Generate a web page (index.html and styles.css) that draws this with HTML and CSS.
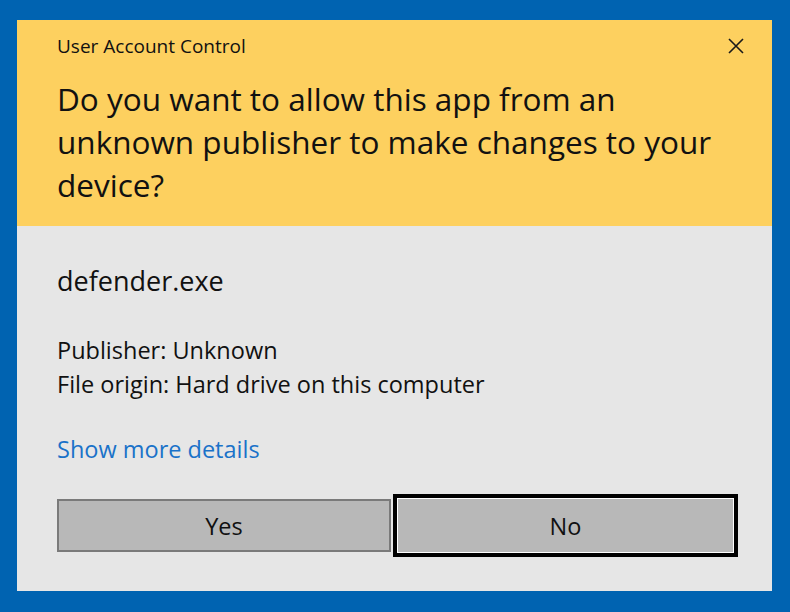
FILE: index.html
```html
<!DOCTYPE html>
<html lang="en">
<head>
<meta charset="utf-8">
<title>User Account Control</title>
<link rel="stylesheet" href="styles.css">
</head>
<body>
<div class="dialog">
  <header class="top">
    <div class="title-row">
      <span class="title">User Account Control</span>
      <button class="close" aria-label="Close">
        <svg width="16" height="16" viewBox="0 0 16 16"><path d="M1 1L15 15M15 1L1 15" stroke="#1a1a1a" stroke-width="1.6" fill="none"/></svg>
      </button>
    </div>
    <h1 class="question">Do you want to allow this app from an<br>unknown publisher to make changes to your<br>device?</h1>
  </header>
  <main class="content">
    <div class="app-name">defender.exe</div>
    <div class="meta">
      <div>Publisher: Unknown</div>
      <div>File origin: Hard drive on this computer</div>
    </div>
    <a class="details" href="#">Show more details</a>
    <div class="buttons">
      <button class="btn yes">Yes</button>
      <button class="btn no">No</button>
    </div>
  </main>
</div>
</body>
</html>
```
FILE: styles.css
```css
html, body {
  margin: 0;
  padding: 0;
}
body {
  background: #0063b1;
  width: 790px;
  height: 612px;
  overflow: hidden;
  font-family: "Open Sans", "Noto Sans", sans-serif;
  color: #111;
}
.dialog {
  margin: 20px 0 0 17px;
  width: 755px;
  height: 571px;
  display: flex;
  flex-direction: column;
  background: #e6e6e6;
}
.top {
  background: #fdd05f;
  height: 206px;
  box-sizing: border-box;
  padding: 14px 0 0 40px;
}
.title-row {
  display: flex;
  align-items: center;
  justify-content: space-between;
  height: 24px;
}
.title {
  font-size: 19px;
  line-height: 24px;
}
.close {
  border: 0;
  background: none;
  padding: 0;
  margin-right: 28px;
  width: 16px;
  height: 16px;
  display: flex;
}
.question {
  margin: 19px 0 0;
  font-weight: normal;
  font-size: 31.5px;
  line-height: 43px;
  white-space: nowrap;
}
.content {
  flex: 1;
  padding: 0 34px 0 40px;
  display: flex;
  flex-direction: column;
}
.app-name {
  margin-top: 38px;
  font-size: 27px;
  line-height: 34px;
}
.meta {
  margin-top: 35px;
  font-size: 23.5px;
  line-height: 34px;
}
.details {
  margin-top: 31px;
  font-size: 23.5px;
  line-height: 34px;
  color: #1a72c9;
  text-decoration: none;
  align-self: flex-start;
}
.buttons {
  margin-top: 28px;
  display: flex;
  align-items: center;
  gap: 2px;
}
.btn {
  font-family: inherit;
  font-size: 23.5px;
  color: #111;
  background: #b8b8b8;
  padding: 0;
  cursor: default;
}
.yes {
  width: 334px;
  height: 53px;
  border: 2px solid #7a7a7a;
}
.no {
  width: 345px;
  height: 63px;
  border: 4px solid #000;
  box-shadow: inset 0 0 0 1px #fff;
}
```
